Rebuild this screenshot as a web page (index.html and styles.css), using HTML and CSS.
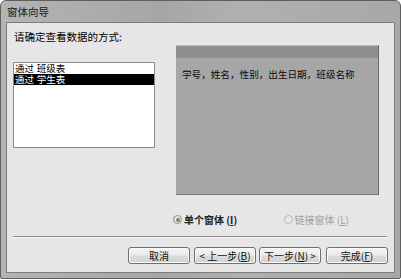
FILE: index.html
```html
<!DOCTYPE html>
<html lang="zh-CN">
<head>
<meta charset="utf-8">
<link rel="stylesheet" href="styles.css">
</head>
<body>
<div class="window">
  <div class="titlebar">窗体向导</div>
  <div class="client">
    <div class="top">
      <div class="left">
        <div class="prompt">请确定查看数据的方式:</div>
        <div class="list">
          <div class="item">通过 班级表</div>
          <div class="item selected">通过 学生表</div>
        </div>
      </div>
      <div class="preview">
        <div class="band"></div>
        <div class="fields">学号，姓名，性别，出生日期，班级名称</div>
      </div>
    </div>
    <div class="options">
      <div class="opt"><span class="radio checked"></span><span class="opt-label">单个窗体 (<u>I</u>)</span></div>
      <div class="opt disabled"><span class="radio"></span><span class="opt-label">链接窗体 (<u>L</u>)</span></div>
    </div>
    <div class="sep"></div>
    <div class="buttons">
      <button class="btn b-cancel">取消</button>
      <button class="btn b-prev">&lt; 上一步(<u>B</u>)</button>
      <button class="btn b-next">下一步(<u>N</u>) &gt;</button>
      <button class="btn b-done">完成(<u>F</u>)</button>
    </div>
  </div>
</div>
</body>
</html>
```

FILE: styles.css
```css
* { box-sizing: border-box; }
html, body { margin: 0; padding: 0; background: #ffffff; }
body {
  font-family: "Noto Sans CJK SC", "Noto Sans", sans-serif;
  font-size: 10px;
  color: #111;
}
.window {
  width: 401px;
  height: 279px;
  background: linear-gradient(90deg, #b4b4b4 0%, #a6a6a6 40%, #b0b0b0 60%, #a8a8a8 100%);
  border: 1px solid #5e5e5e;
  border-radius: 6px 6px 2px 2px;
  padding: 0 5px 5px 5px;
  display: flex;
  flex-direction: column;
}
.titlebar {
  height: 21px;
  line-height: 21px;
  padding-left: 1px;
  font-size: 10.5px;
  color: #1a1a1a;
}
.client {
  flex: 1;
  background: #e6e6e6;
  border: 1px solid #7c7c7c;
  display: flex;
  flex-direction: column;
}
.top {
  display: flex;
  padding-left: 6px;
  height: 171px;
}
.left {
  width: 142px;
  display: flex;
  flex-direction: column;
}
.prompt {
  margin-top: 8px;
  height: 12px;
  line-height: 12px;
  padding-left: 1px;
  font-size: 10.5px;
  color: #000;
}
.list {
  margin-top: 19px;
  height: 86px;
  background: #fff;
  border: 1px solid #8a8a8a;
}
.item {
  height: 11px;
  line-height: 11px;
  padding-left: 1px;
  font-family: "Liberation Sans", "Noto Sans CJK SC", sans-serif;
  font-size: 9.5px;
  color: #000;
  white-space: nowrap;
}
.item.selected {
  background: #000;
  color: #fff;
}
.preview {
  margin-left: 21px;
  margin-top: 22px;
  width: 203px;
  height: 150px;
  background: #a6a6a6;
  border-right: 1px solid #6a6a6a;
  border-bottom: 1px solid #7a7a7a;
  border-top: 1px solid #bcbcbc;
}
.band {
  height: 12px;
  background: #8f8f8f;
}
.fields {
  margin-top: 10px;
  padding-left: 6px;
  font-size: 9.6px;
  line-height: 12px;
  color: #0a0a0a;
  white-space: nowrap;
}
.options {
  display: flex;
  height: 13px;
  margin-top: 19px;
  padding-left: 166px;
  align-items: center;
}
.opt {
  display: flex;
  align-items: center;
  width: 129px;
}
.radio {
  width: 9px;
  height: 9px;
  border-radius: 50%;
  border: 1px solid #8c8c8c;
  background: radial-gradient(circle, #f4f4f4 0%, #dadada 100%);
  margin-right: 2px;
  position: relative;
}
.radio.checked::after {
  content: "";
  position: absolute;
  left: 1.5px;
  top: 1.5px;
  width: 4px;
  height: 4px;
  border-radius: 50%;
  background: #7a7a7a;
}
.opt-label {
  font-size: 10px;
  line-height: 12px;
  font-weight: bold;
  color: #222;
}
.opt.disabled .opt-label {
  font-weight: normal;
  color: #a0a0a0;
}
.opt.disabled .radio {
  border-color: #b8b8b8;
  background: #e8e8e8;
}
.sep {
  margin: 10px 7px 0 6px;
  background: #8e8e8e;
  border-bottom: 1px solid #f4f4f4;
  height: 2px;
}
.buttons {
  display: flex;
  justify-content: flex-end;
  margin-top: 9px;
  padding-right: 6px;
}
.btn {
  width: 62px;
  height: 17px;
  padding: 0;
  font-family: inherit;
  font-size: 10px;
  line-height: 15px;
  color: #111;
  border: 1px solid #707070;
  border-radius: 3px;
  background: linear-gradient(#f4f4f4 0%, #ebebeb 48%, #dcdcdc 52%, #d2d2d2 100%);
  box-shadow: inset 0 0 0 1px #fafafa;
}
.b-prev { margin-left: 4px; }
.b-next { margin-left: 3px; }
.b-done { margin-left: 5px; }
```
